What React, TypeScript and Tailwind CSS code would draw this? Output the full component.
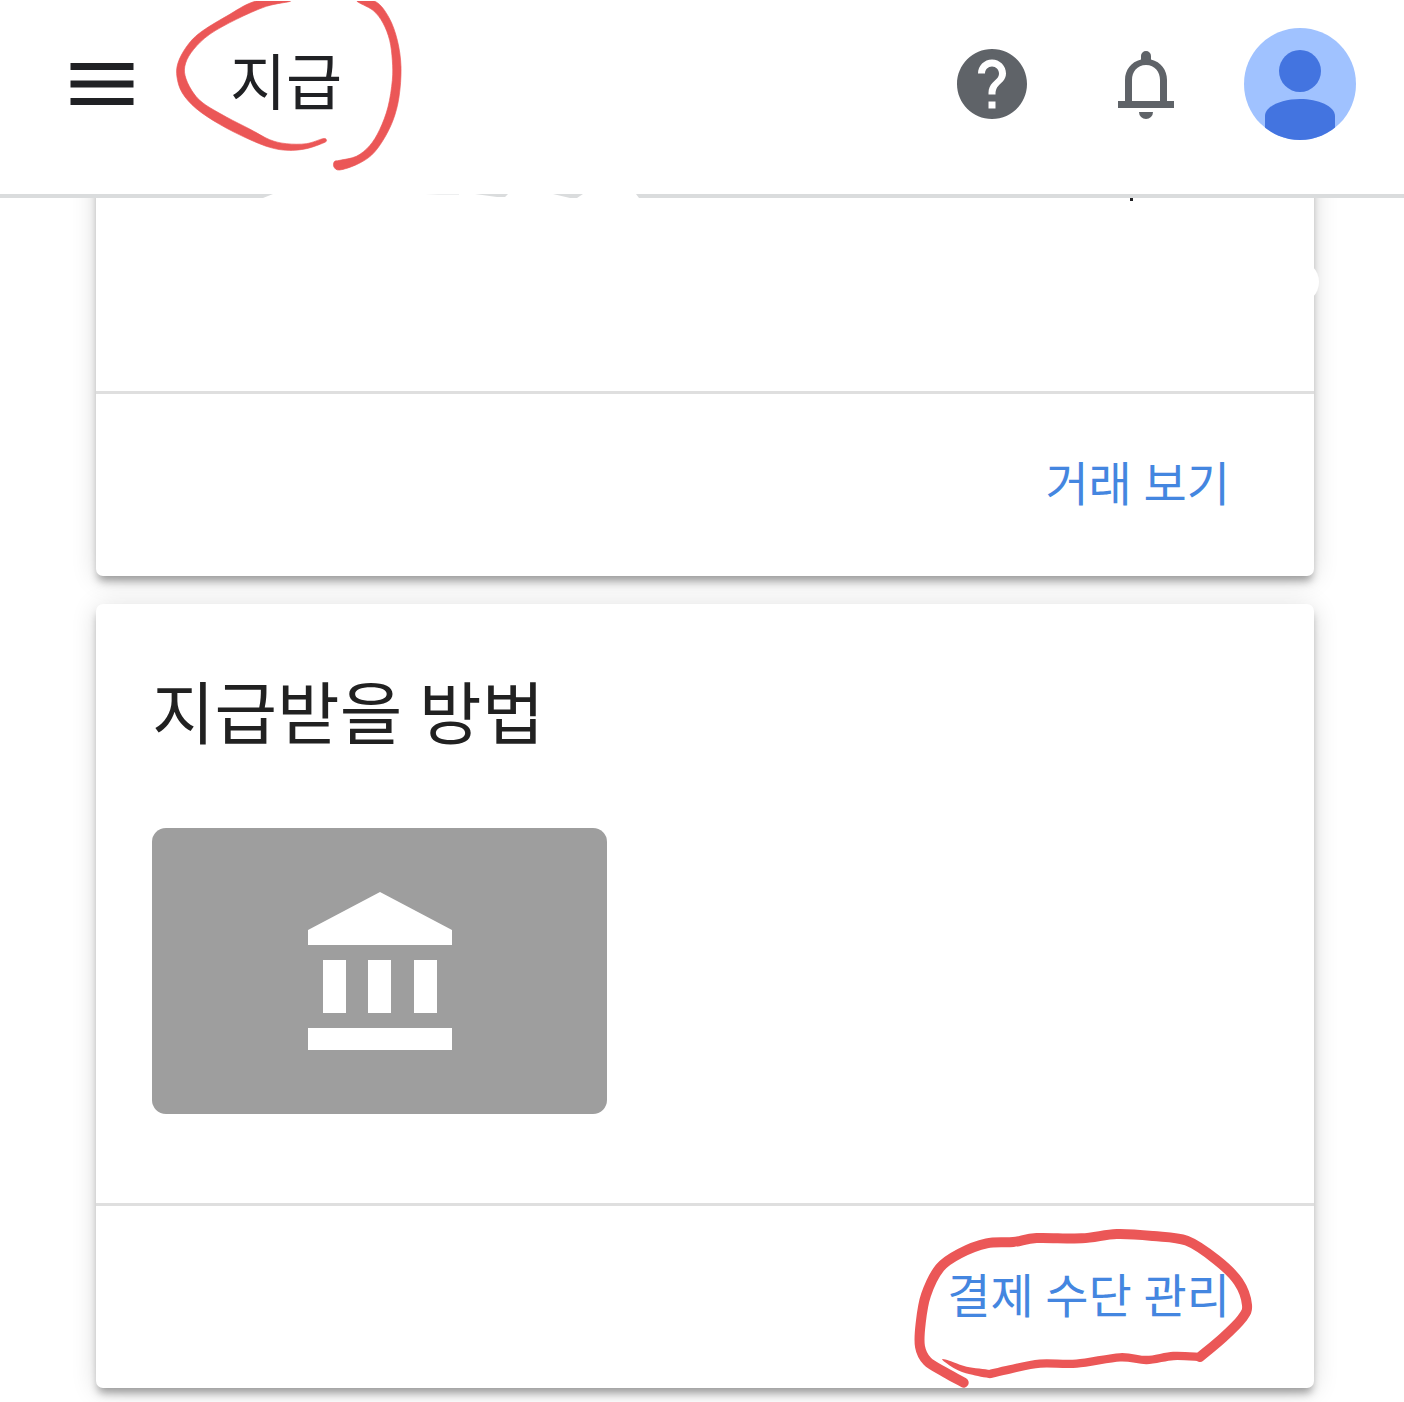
import type { ReactNode } from "react";

type Point = [number, number];

// Catmull-Rom curve through the given points
const smooth = (pts: Point[], closed = false) => {
    const n = pts.length;
    const at = (i: number) => (closed ? pts[(i + n) % n] : pts[Math.max(0, Math.min(n - 1, i))]);
    let d = `M${pts[0][0]} ${pts[0][1]}`;
    for (let i = 0; i < (closed ? n : n - 1); i++) {
        const [a, b, c, e] = [at(i - 1), at(i), at(i + 1), at(i + 2)];
        d += `C${b[0] + (c[0] - a[0]) / 6} ${b[1] + (c[1] - a[1]) / 6} ${c[0] - (e[0] - b[0]) / 6} ${c[1] - (e[1] - b[1]) / 6} ${c[0]} ${c[1]}`;
    }
    return closed ? `${d}Z` : d;
};

const titleLeft: Point[] = [
    [650, 2], [560, 48], [480, 98], [440, 140], [415, 188], [412, 230], [428, 278], [470, 325],
    [540, 372], [620, 413], [690, 441], [745, 450], [800, 445], [853, 427], [860, 419], [850, 415],
    [800, 430], [740, 430], [690, 418], [630, 386], [560, 350], [490, 308], [456, 270], [436, 225],
    [438, 188], [462, 147], [510, 102], [590, 57], [680, 18], [752, 2],
];

const titleRight: Point[] = [
    [952, 2], [1008, 4], [1048, 52], [1073, 120], [1084, 200], [1078, 290], [1060, 360], [1030, 420],
    [995, 465], [950, 493], [900, 509], [883, 500], [884, 484], [900, 480], [950, 468], [990, 436],
    [1020, 388], [1045, 320], [1058, 240], [1058, 180], [1050, 120], [1030, 68], [1000, 30],
];

const linkTop: Point[] = [
    [930, 471], [1000, 412], [1056, 355], [1071, 315], [1045, 245], [980, 180], [890, 122], [790, 108],
    [680, 102], [575, 115], [440, 114], [370, 126], [290, 130], [210, 160], [150, 203], [108, 285],
    [92, 370], [90, 440], [112, 484], [165, 517], [221, 548],
];

const linkBottom: Point[] = [
    [300, 522], [360, 508], [450, 491], [560, 491], [690, 472], [770, 480], [850, 468], [930, 471],
];

const linkTip: Point[] = [
    [157, 479], [178, 482], [230, 500], [300, 510], [308, 523], [300, 534], [240, 523], [195, 506],
];

const TitleCircle = () => (
    <svg viewBox="400 2 696 516" className="pointer-events-none absolute -top-[39px] -left-[57px] h-[172px] w-[232px] max-w-none" fill="#eb5757" stroke="#eb5757" strokeWidth="2" aria-hidden="true">
        <path d={smooth(titleLeft, true)} />
        <path d={smooth(titleRight, true)} />
    </svg>
);

const LinkCircle = () => (
    <svg viewBox="60 72 1050 510" className="pointer-events-none absolute -top-[39px] -right-[30px] h-[170px] w-[350px] max-w-none" fill="none" stroke="#eb5757" strokeLinecap="round" strokeLinejoin="round" aria-hidden="true">
        <path d={smooth(linkTop)} strokeWidth="30" />
        <path d={smooth(linkBottom)} strokeWidth="25" />
        <path d={smooth(linkTip, true)} fill="#eb5757" stroke="none" />
    </svg>
);

const Card = ({ children, action }: { children?: ReactNode; action: ReactNode }) => (
    <section className="relative rounded-[7px] bg-white shadow-[0_7px_9px_-2px_rgba(0,0,0,0.34),0_3px_26px_0_rgba(0,0,0,0.14)]">
        {children}
        <div className="flex h-[185px] items-center justify-end border-t-3 border-[#dfdfdf] pr-[84px] text-[47px] leading-[68px] text-[#4486e0]">
            {action}
        </div>
    </section>
);

const App = () => {
    return (
        <div className="overflow-hidden bg-white pb-[14px] font-[Roboto,'Noto_Sans_CJK_KR',sans-serif] text-[#212121]">
            <header className="relative z-10 flex h-[198px] items-start border-b-4 border-[#dadcdd] bg-white pt-7 pr-12 pl-[60px]">
                <div className="flex h-28 flex-1 items-center">
                    <button aria-label="메뉴">
                        <svg viewBox="0 0 24 24" className="size-[84px]" fill="#202124">
                            <path d="M3 6h18v2H3zM3 11h18v2H3zM3 16h18v2H3z" />
                        </svg>
                    </button>
                    <div className="relative ml-[86px]">
                        <h1 className="text-[61px] leading-[88px] text-[#202124]">지급</h1>
                        <TitleCircle />
                    </div>
                    <button className="ml-auto" aria-label="도움말">
                        <svg viewBox="0 0 24 24" className="size-[84px]" fill="#5f6368">
                            <path d="M12 2C6.48 2 2 6.48 2 12s4.48 10 10 10 10-4.48 10-10S17.52 2 12 2zm1 17h-2v-2h2v2zm2.07-7.75l-.9.92C13.45 12.9 13 13.5 13 15h-2v-.5c0-1.1.45-2.1 1.17-2.83l1.24-1.26c.37-.36.59-.86.59-1.41 0-1.1-.9-2-2-2s-2 .9-2 2H8c0-2.21 1.79-4 4-4s4 1.79 4 4c0 .88-.36 1.68-.93 2.25z" />
                        </svg>
                    </button>
                    <button className="ml-[70px]" aria-label="알림">
                        <svg viewBox="0 0 84 84" className="size-[84px]" fill="#5f6368">
                            <path fillRule="evenodd" d="M37 17.500V14a5 5 0 0 1 10 0v3.500C57 20 63 28 63 38v21h7v7H14v-7h7V38c0-10 6-18 16-20.500zM28 59h28V38c0-8-5-15-14-15s-14 7-14 15z" />
                            <path d="M35 70h14a7 7 0 0 1-14 0z" />
                        </svg>
                    </button>
                    <button className="ml-14 overflow-hidden rounded-full" aria-label="계정">
                        <svg viewBox="0 0 112 112" className="size-28">
                            <path d="M0 0h112v112H0z" fill="#a0c2ff" />
                            <circle cx="56" cy="43" r="21" fill="#4374e0" />
                            <path d="M21 112V88c0-10 17-17 35-17s35 7 35 17v24z" fill="#4374e0" />
                        </svg>
                    </button>
                </div>
                {/* worn-away part of the divider */}
                <svg viewBox="0 0 376 4" className="absolute top-[194px] left-[263px] h-1 w-[376px]" aria-hidden="true">
                    <path d="M10 0H373L376 4H0z" fill="#fff" />
                    <path d="M162 0h34v1h-20z" fill="#eeeff0" />
                    <path d="M212 0h33l-3 3h-8zM290 0h30l-6 4h-7z" fill="#dadcdd" />
                </svg>
            </header>

            {/* the first card is scrolled partly under the header */}
            <main className="-mt-10 flex flex-col gap-7 pr-[90px] pl-24">
                <Card action={<button>거래 보기</button>}>
                    <div className="h-[233px]" />
                    <span className="absolute top-10 right-[181px] h-[3px] w-[3px] bg-[#202124]" />
                    <span className="absolute top-[102px] -right-[5px] size-11 rounded-full bg-white" />
                </Card>

                <Card
                    action={
                        <div className="relative">
                            <button>결제 수단 관리</button>
                            <LinkCircle />
                        </div>
                    }
                >
                    <div className="px-14 pt-14 pb-[89px]">
                        <h2 className="text-[68px] leading-[112px]">지급받을 방법</h2>
                        <div className="mt-14 flex h-[286px] w-[455px] items-center justify-center rounded-[14px] bg-[#9e9e9e]">
                            <svg viewBox="0 0 144 158" className="h-[158px] w-36" fill="#fff" aria-hidden="true">
                                <path d="M72 0L144 38v15H0V38zM15 68h23v53H15zM60 68h23v53H60zM106 68h23v53h-23zM0 136h144v22H0z" />
                            </svg>
                        </div>
                    </div>
                </Card>
            </main>
        </div>
    );
};

export default App;
